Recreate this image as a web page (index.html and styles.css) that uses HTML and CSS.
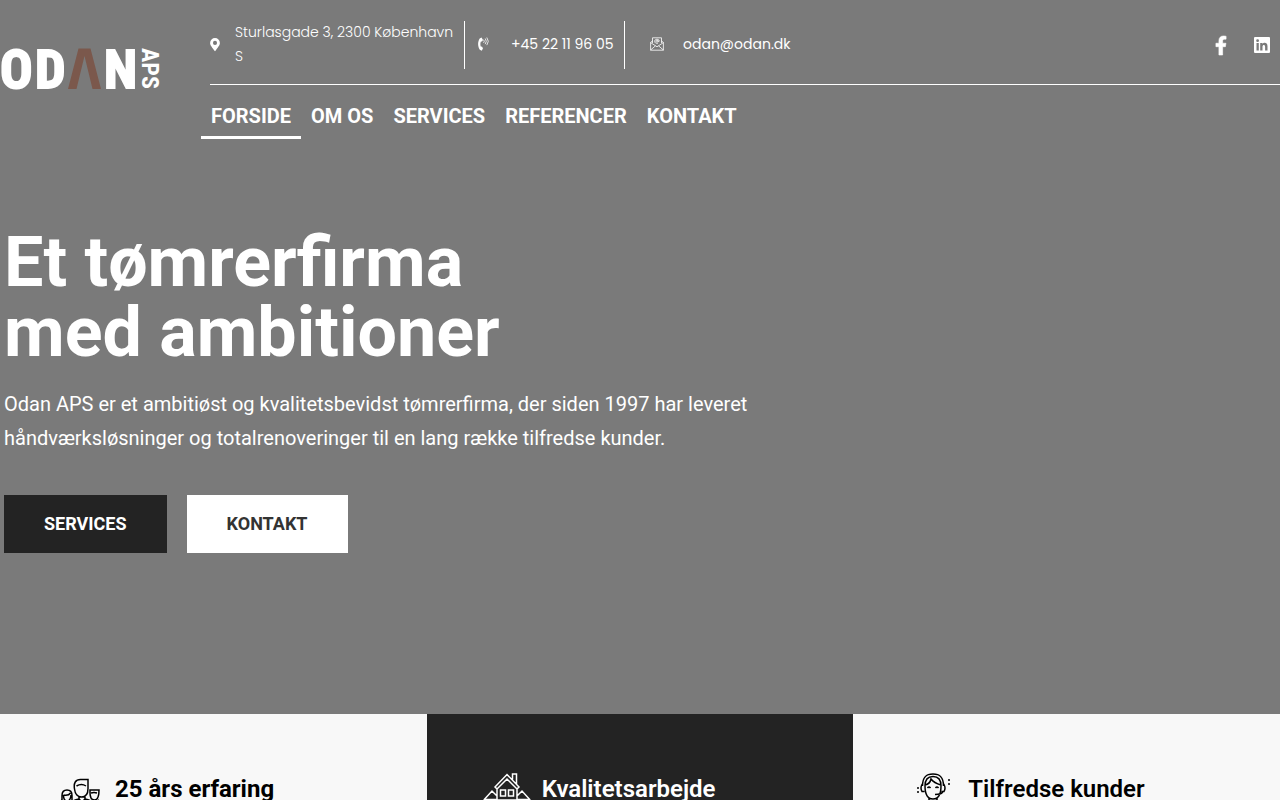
FILE: index.html
```html
<!DOCTYPE html>
<html lang="da">
<head>
<meta charset="utf-8">
<meta name="viewport" content="width=device-width, initial-scale=1">
<title>Odan APS</title>
<link rel="stylesheet" href="styles.css">
</head>
<body>
<div class="page">
  <div class="hero">
    <header class="header">
      <a class="logo" href="#" aria-label="Odan APS">
        <svg class="logo-mark" viewBox="0 0 160 44" width="160" height="44">
          <g class="logo-word">
            <text x="0 35" y="41">OD</text>
            <text x="104" y="41">N</text>
          </g>
          <path class="logo-accent" d="M68 42 78.500 1.500H90.500L101 42H92.500L84.500 9 76.500 42Z"/>
          <text class="logo-suffix" transform="translate(142 1) rotate(90)" x="0" y="0">APS</text>
        </svg>
      </a>
      <div class="header-main">
        <div class="topbar">
          <div class="contact contact-address">
            <svg class="pin" viewBox="0 0 384 512" width="10" height="13"><path fill="currentColor" fill-rule="evenodd" d="M172 502C27 291 0 270 0 192a192 192 0 0 1 384 0c0 78-27 99-172 310a24 24 0 0 1-40 0ZM192 272a80 80 0 1 0 0-160 80 80 0 0 0 0 160Z"/></svg>
            <span>Sturlasgade 3, 2300 København S</span>
          </div>
          <div class="contact contact-phone">
            <svg viewBox="0 0 14 14" width="14" height="14"><path fill="currentColor" d="M4.500.5 2.700 1.400C.6 4.600.6 9.400 2.800 12.700L4.800 13.700 6 11.200 4.900 9.500 3.900 9.700C3.200 8 3.200 6.200 3.900 4.500L5 4.600 6 2.900Z"/><path fill="none" stroke="currentColor" stroke-width=".8" d="M6.600 2.700q1.300 1.600 0 3.200M8.200 1.500q2.200 2.800 0 5.600M9.800.5q3 3.800 0 7.600"/></svg>
            <a href="tel:+4522119605">+45 22 11 96 05</a>
          </div>
          <div class="contact contact-mail">
            <svg viewBox="0 0 14 14" width="14" height="14" fill="none" stroke="currentColor" stroke-width=".8"><path d="M2.500 6V.8h9V6M2.500 4 .6 5.400v7.800h12.800V5.400L11.500 4M.6 5.600 7 9.800l6.400-4.200M.6 13 5.400 8.900M13.400 13 8.600 8.900"/><circle cx="7" cy="4.200" r="1"/><path d="M8 3.200v1.300q.9.600 1.300-.4C9.300 1.600 4.700 1.600 4.700 4.200c0 1.700 1.500 2.500 3.200 2.100"/></svg>
            <a href="mailto:odan@odan.dk">odan@odan.dk</a>
          </div>
          <div class="social">
            <a href="#" aria-label="Facebook"><svg viewBox="0 0 320 512" width="12" height="19"><path fill="currentColor" stroke="currentColor" stroke-width="16" d="m279 288 14-93h-89v-60c0-25 12-50 52-50h41V7s-37-7-72-7c-73 0-121 44-121 125v70H23v93h81v224h100V288Z"/></svg></a>
            <a href="#" aria-label="LinkedIn"><svg viewBox="0 0 16 16" width="16" height="16"><path fill="currentColor" fill-rule="evenodd" d="M1 0h14q1 0 1 1v14q0 1-1 1H1q-1 0-1-1V1q0-1 1-1Zm1.500 6v7.500h2.300V6ZM3.600 2.300a1.400 1.400 0 1 0 0 2.800 1.400 1.400 0 0 0 0-2.800ZM6.200 6v7.500h2.300V9.800c0-2.300 2.600-2.300 2.600 0v3.700h2.400V9.200c0-4-3.900-4-5-2.200V6Z"/></svg></a>
          </div>
        </div>
        <nav class="nav">
          <a class="nav-link is-active" href="#">FORSIDE</a>
          <a class="nav-link" href="#">OM OS</a>
          <a class="nav-link" href="#">SERVICES</a>
          <a class="nav-link" href="#">REFERENCER</a>
          <a class="nav-link" href="#">KONTAKT</a>
        </nav>
      </div>
    </header>
    <main class="intro">
      <h1 class="intro-title">Et tømrerfirma<br>med ambitioner</h1>
      <p class="intro-text">Odan APS er et ambitiøst og kvalitetsbevidst tømrerfirma, der siden 1997 har leveret håndværksløsninger og totalrenoveringer til en lang række tilfredse kunder.</p>
      <div class="actions">
        <a class="button button-dark" href="#">SERVICES</a>
        <a class="button button-light" href="#">KONTAKT</a>
      </div>
    </main>
  </div>
  <section class="features">
    <article class="feature">
      <svg class="feature-icon" viewBox="0 0 48 48" width="48" height="48"><path d="M18.500 17c-1-6 1-9.500 6-9.500H32v9c0 6-3 8.500-6.500 8.500s-6.500-3-7-8ZM20.500 14q5-3 9.500 0M23 24v3l3 3 3-3v-3M23 27q-7 1-8 5v14h22V32q-1-4-8-5M6 28v-4.500q0-5.500 5-5.500t5 5.500V28M7.500 23q5 1 7-2M7.500 23q0 6 3.500 6t4-6M34 18h9q0 10-4.500 10T34 20.500ZM35 21q3-1 6 0M6 28q-4 2-4 18M42 28q4 2 4 18"/></svg>
      <h2 class="feature-title feature-title-strong">25 års erfaring</h2>
    </article>
    <article class="feature feature-dark">
      <svg class="feature-icon" viewBox="0 0 48 48" width="48" height="48"><path d="M12 15 24 2.500 36 15l-2 2L24 7 14 17ZM29.500 7.500V2h4v10M14 17v27M34 17v27M.8 28 9 19l5 5M47.200 28 39 19l-5 5M1 27.500h13M34 27.500h13M3.500 28v16h41V28M17.500 18h5v6h-5ZM25.500 18h5v6h-5ZM14 28h20M20 44V32h8v12M7 32h4v5H7ZM37 32h4v5h-4Z"/></svg>
      <h2 class="feature-title">Kvalitetsarbejde</h2>
    </article>
    <article class="feature">
      <svg class="feature-icon" viewBox="0 0 48 48" width="48" height="48"><path d="M13.500 14C13.500 5 17 2 24 2s10.500 3 10.500 12M16 14c0-7 3-9.500 8-9.500S32 7 32 14M16 14q0 13 8 13t8-13M16 13q5-1 6-6 3 4 10 6M14 12.500h-1q-2 3.500 0 7h2.500M34 12.500h1q2 3.500 0 7h-2.500M18.500 16q1.500-2 3 0M26.500 16q1.500-2 3 0M34 19.500q-1 3-8 3M20 26v2.500q-9 1.500-11 8V46h30v-9.500q-2-6.500-11-8V26M18 29l6 15 6-15M14 30l8 14M34 30l-8 14"/><path stroke-dasharray="2 2" d="M9 15v8M40 7v7"/></svg>
      <h2 class="feature-title">Tilfredse kunder</h2>
    </article>
  </section>
</div>
</body>
</html>
```
FILE: styles.css
```css
* {
  box-sizing: border-box;
}

body {
  margin: 0;
  font-family: Roboto, "Liberation Sans", sans-serif;
  color: #fff;
}

a {
  color: inherit;
  text-decoration: none;
}

svg {
  display: block;
  flex: none;
  overflow: visible;
}

.page {
  height: 100vh;
  overflow: hidden;
  background: #f8f8f8;
}

.hero {
  padding-bottom: 161px;
  background: #7a7a7a;
}

.header {
  display: flex;
}

.logo {
  flex: none;
  width: 201px;
  padding-top: 47px;
}

.logo-word {
  font: bold 54px "Liberation Sans Narrow", "Roboto Condensed", "Liberation Sans", sans-serif;
  fill: #fff;
  stroke: #fff;
  stroke-width: 2;
}

.logo-suffix {
  font: bold 24px "Liberation Sans Narrow", "Roboto Condensed", "Liberation Sans", sans-serif;
  fill: #fff;
}

.logo-accent {
  fill: #7b584c;
}

.header-main {
  flex: 1;
  min-width: 0;
}

.topbar {
  display: flex;
  align-items: center;
  margin-left: 9px;
  padding: 21px 10px 15px 0;
  border-bottom: 1px solid #fff;
  font-family: Poppins, Inter, sans-serif;
  font-size: 14px;
  line-height: 24px;
}

.contact {
  display: flex;
  align-items: center;
  height: 48px;
  padding-bottom: 2px;
}

.contact-address {
  gap: 15px;
  width: 255px;
  border-right: 1px solid #fff;
  font-weight: 300;
}

.contact-phone {
  gap: 20px;
  width: 160px;
  padding-left: 12px;
  border-right: 1px solid #fff;
}

.contact-mail {
  gap: 19px;
  padding-left: 25px;
}

.social {
  display: flex;
  align-items: center;
  gap: 27px;
  margin-left: auto;
}

.nav {
  display: flex;
}

.nav-link {
  padding: 16px 10px 5px;
  border-bottom: 3px solid transparent;
  font-size: 20px;
  font-weight: 700;
  line-height: 30px;
}

.is-active {
  border-color: #fff;
}

.intro {
  padding: 88px 4px 0;
}

.intro-title {
  margin: 0;
  font-size: 70px;
  font-weight: 700;
  line-height: 70px;
}

.intro-text {
  max-width: 768px;
  margin: 20px 0 40px;
  font-size: 20px;
  line-height: 34px;
}

.actions {
  display: flex;
  gap: 20px;
}

.button {
  padding: 20px 40px;
  font-size: 18px;
  font-weight: 700;
  line-height: 18px;
}

.button-dark {
  background: #232323;
}

.button-light {
  background: #fff;
  color: #333;
}

.features {
  display: grid;
  grid-template-columns: repeat(3, 1fr);
}

.feature {
  display: flex;
  gap: 11px;
  padding: 58px 56px;
  background: #f8f8f8;
  color: #000;
}

.feature-dark {
  background: #232323;
  color: #fff;
}

.feature-icon {
  fill: none;
  stroke: currentColor;
  stroke-width: 1.5;
}

.feature-title {
  margin: 2px 0 0;
  font-size: 24px;
  font-weight: 600;
  line-height: 30px;
}

.feature-title-strong {
  font-weight: 700;
}
```
